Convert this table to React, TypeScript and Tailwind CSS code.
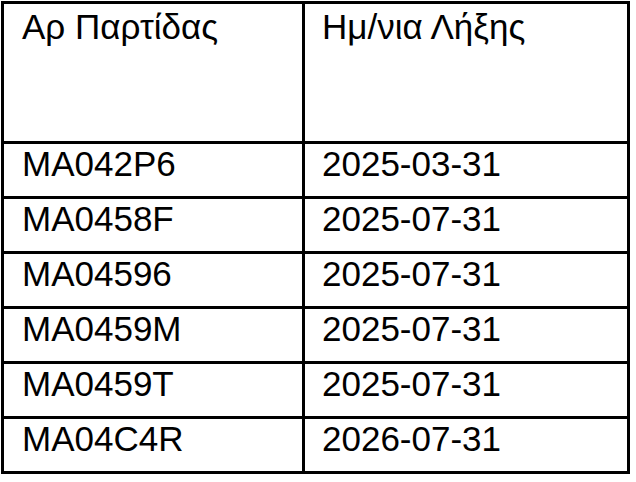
import React from "react";

const rows: [string, string][] = [
  ["MA042P6", "2025-03-31"],
  ["MA0458F", "2025-07-31"],
  ["MA04596", "2025-07-31"],
  ["MA0459M", "2025-07-31"],
  ["MA0459T", "2025-07-31"],
  ["MA04C4R", "2026-07-31"],
];

export default function App() {
  return (
    <div className="w-[636px] h-[482px] bg-white pt-[1px] pl-[1px]" style={{ fontFamily: '"Liberation Sans", Arial, sans-serif' }}>
      <div className="w-[629px] border-[3px] border-black bg-black grid grid-cols-[298px_322px] gap-[3px] text-[35px] leading-[40px] text-black">
        <div className="bg-white h-[137px] pl-[18px] pt-[3px]">Αρ Παρτίδας</div>
        <div className="bg-white h-[137px] pl-[17px] pt-[3px]">Ημ/νια Λήξης</div>
        {rows.map(([a, b]) => (
          <React.Fragment key={a}>
            <div className="bg-white h-[52px] pl-[18px]">{a}</div>
            <div className="bg-white h-[52px] pl-[17px]">{b}</div>
          </React.Fragment>
        ))}
      </div>
    </div>
  );
}
